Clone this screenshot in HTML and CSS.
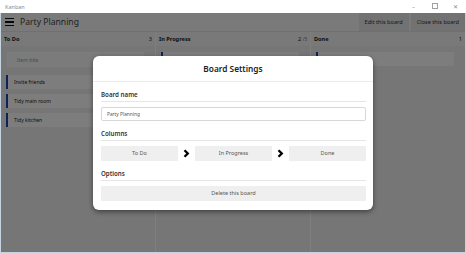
FILE: index.html
```html
<!DOCTYPE html>
<html lang="en">
<head>
  <meta charset="UTF-8">
  <meta name="viewport" content="width=device-width, initial-scale=1.0">
  <title>Kanban</title>
  <link rel="stylesheet" href="styles.css">
</head>
<body>
  <div class="window">
    <div class="titlebar">
      <span class="app-name">Kanban</span>
      <div class="controls">
        <span class="ctl">&#8211;</span>
        <span class="ctl ctl-max"></span>
        <span class="ctl">&#x2715;</span>
      </div>
    </div>

    <div class="app">
      <header class="topbar">
        <div class="menu-icon"><span></span><span></span><span></span></div>
        <h1>Party Planning</h1>
        <div class="actions">
          <button>Edit this board</button>
          <button>Close this board</button>
        </div>
      </header>

      <main class="board">
        <section class="column">
          <div class="column-head"><span class="name">To Do</span><span class="count">3</span></div>
          <div class="cards">
            <div class="new-item">Item title</div>
            <div class="card">Invite friends</div>
            <div class="card">Tidy main room</div>
            <div class="card">Tidy kitchen</div>
          </div>
        </section>
        <section class="column">
          <div class="column-head"><span class="name">In Progress</span><span class="count">2 <small>/5</small></span></div>
          <div class="cards">
            <div class="card">Buy snacks</div>
          </div>
        </section>
        <section class="column">
          <div class="column-head"><span class="name">Done</span><span class="count">1</span></div>
          <div class="cards">
            <div class="card">Send invitations</div>
          </div>
        </section>
      </main>

      <!-- modal sits over the dimmed board -->
      <div class="overlay">
        <div class="modal">
          <div class="modal-title">Board Settings</div>
          <div class="modal-body">
            <div class="section-head">Board name</div>
            <div class="text-input">Party Planning</div>

            <div class="section-head">Columns</div>
            <div class="column-row">
              <button class="plain-btn">To Do</button>
              <span class="arrow"><svg width="7" height="9" viewBox="0 0 7 9"><polyline points="1.5,1.2 4.8,4.5 1.5,7.8" fill="none" stroke="#000" stroke-width="2.3"/></svg></span>
              <button class="plain-btn">In Progress</button>
              <span class="arrow"><svg width="7" height="9" viewBox="0 0 7 9"><polyline points="1.5,1.2 4.8,4.5 1.5,7.8" fill="none" stroke="#000" stroke-width="2.3"/></svg></span>
              <button class="plain-btn">Done</button>
            </div>

            <div class="section-head">Options</div>
            <button class="plain-btn wide">Delete this board</button>
          </div>
        </div>
      </div>
    </div>
  </div>
</body>
</html>
```

FILE: styles.css
```css
body {
  margin: 0;
  font-family: "Noto Sans", "Open Sans", sans-serif;
  background: #ffffff;
}
.window {
  width: 466px;
  height: 253px;
  display: flex;
  flex-direction: column;
  overflow: hidden;
}
.titlebar {
  height: 13px;
  display: flex;
  align-items: center;
  justify-content: space-between;
  background: #ffffff;
}
.app-name {
  font-size: 5.5px;
  color: #8a8a8a;
  padding-left: 5px;
}
.controls {
  display: flex;
  align-items: center;
}
.ctl {
  width: 21px;
  text-align: center;
  font-size: 6px;
  color: #8a8a8a;
}
.ctl-max::before {
  content: "";
  display: inline-block;
  width: 4px;
  height: 4px;
  border: 1px solid #a0a0a0;
}
.app {
  flex: 1;
  display: flex;
  flex-direction: column;
  position: relative;
  border: 1px solid #c6d4e2;
  border-top: none;
}
.topbar {
  height: 18px;
  display: flex;
  align-items: center;
  background: #f4f4f4;
  border-bottom: 1px solid #e0e0e0;
}
.menu-icon {
  width: 9px;
  margin: 0 6px 0 4px;
  display: flex;
  flex-direction: column;
  gap: 2px;
}
.menu-icon span {
  height: 1.5px;
  background: #111;
}
.topbar h1 {
  flex: 1;
  margin: 0;
  font-size: 8.6px;
  font-weight: 400;
  color: #444;
}
.actions {
  display: flex;
  align-self: stretch;
  gap: 2px;
}
.actions button {
  border: none;
  background: #e4e4e4;
  font-family: inherit;
  font-size: 5.6px;
  color: #333;
  padding: 0 6px;
}
.board {
  flex: 1;
  display: flex;
  background: #ececec;
}
.column {
  flex: 1;
  border-right: 1px solid #ffffff;
}
.column:last-child {
  border-right: none;
}
.column-head {
  height: 14px;
  display: flex;
  align-items: center;
  justify-content: space-between;
  padding: 0 3px;
  background: #f2f2f2;
  font-size: 5.6px;
  color: #222;
}
.column-head .name {
  font-weight: 700;
}
.column-head small {
  font-size: 4.5px;
  color: #777;
}
.cards {
  display: flex;
  flex-direction: column;
  gap: 5px;
  padding: 6px 11px 0 5px;
}
.new-item {
  height: 13px;
  margin: 0 0 3px 1px;
  padding-left: 9px;
  display: flex;
  align-items: center;
  background: #f6f6f6;
  border: 1px solid #fafafa;
  font-size: 5px;
  color: #999;
}
.card {
  height: 14px;
  display: flex;
  align-items: center;
  padding-left: 6px;
  background: #fbfbfb;
  border-left: 2px solid #1e44b0;
  font-size: 5px;
  color: #222;
}
.overlay {
  position: absolute;
  inset: 0;
  background: rgba(0, 0, 0, 0.5);
  display: flex;
  align-items: center;
  justify-content: center;
}
.modal {
  width: 280px;
  background: #ffffff;
  border-radius: 6px;
  box-shadow: 0 2px 5px rgba(0, 0, 0, 0.45);
}
.modal-title {
  height: 25px;
  line-height: 25px;
  text-align: center;
  font-size: 8.3px;
  font-weight: 600;
  color: #222;
  border-bottom: 1px solid #ececec;
}
.modal-body {
  padding: 0 7px 9px 8px;
}
.section-head {
  margin-top: 7px;
  line-height: 12px;
  font-size: 6.2px;
  font-weight: 600;
  color: #333;
  border-bottom: 1px solid #e6e6e6;
}
.text-input {
  margin-top: 5px;
  height: 12px;
  display: flex;
  align-items: center;
  padding-left: 5px;
  border: 1px solid #d8d8d8;
  border-radius: 2px;
  font-size: 4.8px;
  color: #555;
}
.column-row {
  margin-top: 5px;
  display: flex;
  align-items: center;
}
.plain-btn {
  flex: 1;
  height: 15px;
  border: none;
  background: #efefef;
  font-family: inherit;
  font-size: 5.5px;
  color: #555;
  padding: 0;
}
.plain-btn.wide {
  display: block;
  width: 100%;
  margin-top: 5px;
}
.arrow {
  width: 17px;
  display: flex;
  justify-content: center;
}
```
